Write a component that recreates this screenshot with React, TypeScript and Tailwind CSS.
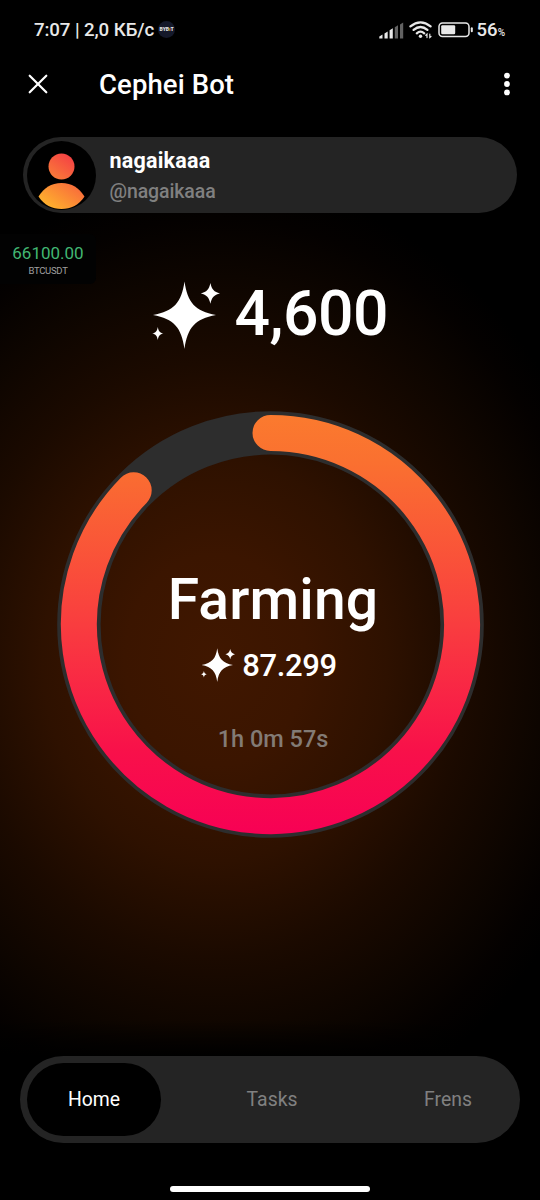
import React from "react";

function Sparkles({ className }: { className: string }) {
  return (
    <svg viewBox="0 0 68 68" className={className} fill="white" aria-hidden="true">
      <path d="M32.5 0.5C35.5 21.5 43 30 64 34C43 38 35.5 46.5 32.5 68C29.5 46.5 22 38 1 34C22 30 29.5 21.5 32.5 0.5Z" />
      <path d="M58.4 2C59.8 8.5 62 11 68 12.4C62 13.8 59.8 16.3 58.4 22.7C57 16.3 54.8 13.8 48.8 12.4C54.8 11 57 8.5 58.4 2Z" />
      <path d="M5.8 46C6.6 50.3 7.8 51.6 11.4 52.5C7.8 53.4 6.6 54.7 5.8 59C5 54.7 3.8 53.4 0.2 52.5C3.8 51.6 5 50.3 5.8 46Z" />
    </svg>
  );
}

function StatusBar() {
  return (
    <div className="flex h-[60px] items-center justify-between pr-[35px] pl-[34px] text-[#e8e8e8]">
      <div className="flex items-center">
        <span className="text-[18.7px] leading-none font-medium tracking-[-0.1px] whitespace-nowrap">7:07 | 2,0 КБ/с</span>
        <span className="ml-[4px] flex size-[17px] items-center justify-center rounded-full bg-[#15192a] text-[5px] leading-none font-black text-[#e4e4e4]">
          BYB<span className="text-[#f5a81c]">ı</span>T
        </span>
      </div>
      <div className="flex items-center">
        <svg width="25" height="18" viewBox="0 0 25 18" className="mt-px" aria-hidden="true">
          <g fill="#e8e8e8">
            <path d="M0.300 16.500V14.500L3.500 12.500V16.500Z" />
            <path d="M5.500 16.500V11.500L8.700 9.500V16.500Z" />
            <path d="M10.600 16.500V8.200L13.800 6.200V16.500Z" />
          </g>
          <g fill="#626262">
            <path d="M15.800 16.500V5.200L19 3.200V16.500Z" />
            <path d="M21 16.500V2.500L24.200 0.500V16.500Z" />
          </g>
        </svg>
        <svg width="24" height="18" viewBox="0 0 24 18" className="ml-[5px]" fill="none" stroke="#e8e8e8" strokeWidth="2.3" strokeLinecap="round" aria-hidden="true">
          <path d="M1.4 5.400Q11.500 -2.600 21.600 5.400" />
          <path d="M4.600 8.900Q11.500 3.200 18.400 8.900" />
          <path d="M7.800 12.300Q11.500 9 15.200 12.300" />
          <circle cx="11.500" cy="15.300" r="1.700" fill="#e8e8e8" stroke="none" />
          <path d="M18 16.600V13.200L16.800 14.300M20.800 13V16.500L22 15.500" strokeWidth="1.2" />
        </svg>
        <svg width="36" height="16" viewBox="0 0 36 16" className="ml-[5px]" aria-hidden="true">
          <rect x="1" y="1" width="30" height="13.4" rx="3.5" fill="none" stroke="#e8e8e8" strokeWidth="1.5" />
          <rect x="3.2" y="3.2" width="14" height="9" rx="1.2" fill="#e8e8e8" />
          <rect x="32.8" y="5.3" width="2" height="5" rx="1" fill="#e8e8e8" />
        </svg>
        <span className="ml-[3px] flex items-baseline leading-none font-medium">
          <span className="text-[18.5px]">56</span>
          <span className="text-[10px]">%</span>
        </span>
      </div>
    </div>
  );
}

function Header() {
  return (
    <header className="flex h-[48px] items-center pr-[29px] pl-[28px]">
      <svg width="20" height="20" viewBox="0 0 20 20" stroke="white" strokeWidth="2.2" strokeLinecap="round" aria-hidden="true">
        <path d="M1.7 1.7L18.3 18.3M18.3 1.7L1.7 18.3" />
      </svg>
      <h1 className="ml-[51px] flex-1 pt-px text-[27.5px] leading-none font-medium tracking-[0.1px]">Cephei Bot</h1>
      <svg width="8" height="24" viewBox="0 0 8 24" fill="white" aria-hidden="true">
        <circle cx="4" cy="3.6" r="2.9" />
        <circle cx="4" cy="12" r="2.9" />
        <circle cx="4" cy="20.4" r="2.9" />
      </svg>
    </header>
  );
}

function ProfileCard() {
  return (
    <section className="mx-[23px] mt-[29px] flex h-[76px] items-center rounded-full bg-[#242424] pl-[4px]">
      <svg width="69" height="69" viewBox="0 0 69 69" aria-hidden="true">
        <defs>
          <linearGradient id="avatar" x1="12" y1="62" x2="46" y2="14" gradientUnits="userSpaceOnUse">
            <stop offset="0" stopColor="#ffb52c" />
            <stop offset="1" stopColor="#f43d45" />
          </linearGradient>
        </defs>
        <circle cx="34.5" cy="34.5" r="34.5" fill="black" />
        <circle cx="34.5" cy="25.5" r="13" fill="url(#avatar)" />
        <path d="M11.500 55.500C17 47 24 42 34.500 42S52 47 57.500 55.500C52 64 44 68 34.500 68S17 64 11.500 55.500Z" fill="url(#avatar)" />
      </svg>
      <div className="ml-[13.5px] flex flex-col pt-[2px]">
        <span className="text-[21.5px] leading-[29px] font-bold tracking-[0.2px]">nagaikaaa</span>
        <span className="mt-[2px] text-[19.5px] leading-[30px] font-medium tracking-[-0.1px] text-[#808080]">@nagaikaaa</span>
      </div>
    </section>
  );
}

function PriceTicker() {
  return (
    <aside className="absolute top-[234px] left-0 flex h-[50px] w-[96px] flex-col items-center rounded-r-[6px] bg-[#020202] pt-[9px]">
      <span className="text-[17px] leading-[20px] text-[#41b772]">66100.00</span>
      <span className="mt-[2px] text-[9.5px] leading-[12px] tracking-[-0.3px] text-[#a0a0a0]">BTCUSDT</span>
    </aside>
  );
}

function FarmingRing() {
  return (
    <section className="mt-[62px] ml-[57px] grid size-[427px] shrink-0">
      <svg viewBox="0 0 427 427" className="col-start-1 row-start-1 size-full" fill="none" aria-hidden="true">
        <defs>
          <linearGradient id="progress" x1="0" y1="0" x2="0" y2="427" gradientUnits="userSpaceOnUse">
            <stop offset="0" stopColor="#fb7b2e" />
            <stop offset="0.12" stopColor="#fa7030" />
            <stop offset="0.5" stopColor="#f93d3f" />
            <stop offset="0.8" stopColor="#f8104a" />
            <stop offset="1" stopColor="#f70055" />
          </linearGradient>
        </defs>
        <circle cx="213.500" cy="213.500" r="191.600" stroke="#2d2d2d" strokeWidth="43.400" />
        <path d="M213.500 21.900A191.600 191.600 0 1 1 76.700 79.300" stroke="url(#progress)" strokeWidth="36" strokeLinecap="round" />
      </svg>
      <div className="col-start-1 row-start-1 flex flex-col items-center pt-[155px] pl-[5px]">
        <h2 className="text-[57px] leading-[68px] font-medium tracking-[0.15px]">Farming</h2>
        <div className="mt-[11px] -ml-[8px] flex h-[40px] items-center">
          <Sparkles className="size-[34px]" />
          <span className="ml-[7px] text-[31px] leading-none font-medium tracking-[-0.4px]">87.299</span>
        </div>
        <span className="mt-[38px] text-[23.500px] leading-[32px] font-medium text-[#837b75]">1h 0m 57s</span>
      </div>
    </section>
  );
}

function BottomNav() {
  return (
    <nav className="mx-[20px] flex h-[87px] shrink-0 items-center justify-between rounded-full bg-[#242424] pr-[48px] pl-[7px] text-[19.4px] text-[#808080]">
      <a className="flex h-[73px] w-[134px] items-center justify-center rounded-full bg-black text-white">Home</a>
      <a className="ml-[13px]">Tasks</a>
      <a className="ml-[54px]">Frens</a>
    </nav>
  );
}

export default function App() {
  return (
    <div className="relative flex h-[1200px] w-[540px] flex-col overflow-hidden bg-black bg-[linear-gradient(to_bottom,transparent_1020px,#000_1056px),radial-gradient(ellipse_410px_480px_at_215px_660px,#401700_0%,#3b1500_22%,#2e1100_42%,#1b0a00_62%,#0d0500_80%,#040100_92%,#000_100%)] font-['Roboto',sans-serif] text-white">
      <StatusBar />
      <Header />
      <ProfileCard />
      <PriceTicker />
      <section className="mt-[67px] ml-[152px] flex h-[69px] items-center">
        <Sparkles className="size-[68px]" />
        <span className="ml-[14.5px] text-[62.5px] leading-none font-medium tracking-[-0.5px]">4,600</span>
      </section>
      <FarmingRing />
      <div className="flex-1" />
      <BottomNav />
      <div className="mx-auto mt-[43px] mb-[8px] h-[6px] w-[200px] shrink-0 rounded-full bg-white" />
    </div>
  );
}
